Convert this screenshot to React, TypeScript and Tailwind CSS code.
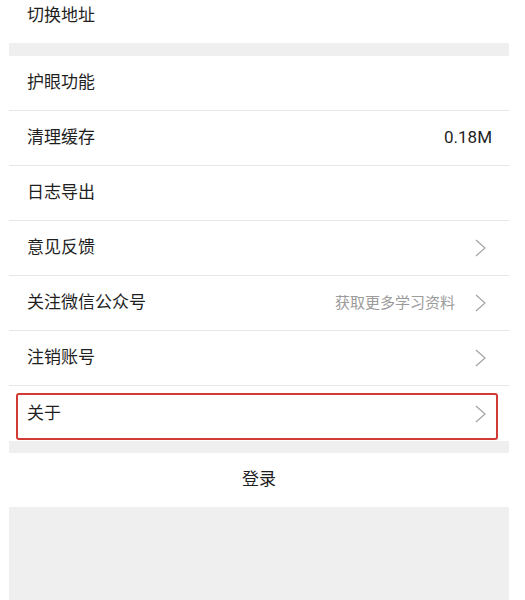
import React from "react";

const Chevron = () => (
  <svg width="11" height="18" viewBox="0 0 11 18" className="mr-[6px] shrink-0">
    <path d="M1 1 L10 9 L1 17" fill="none" stroke="#a0a0a0" strokeWidth="1.1" />
  </svg>
);

type RowProps = {
  label: string;
  value?: string;
  valueGray?: boolean;
  chevron?: boolean;
  border?: boolean;
  highlight?: boolean;
};

const Row = ({ label, value, valueGray, chevron, border = true, highlight }: RowProps) => (
  <div
    className={`relative flex h-[55px] items-center justify-between bg-white pl-[18px] pr-[17px] ${
      border ? "border-b border-[#e6e6e6]" : ""
    }`}
  >
    <span className="text-[17px] text-[#1f1f1f]">{label}</span>
    <div className="flex items-center">
      {value && (
        <span className={valueGray ? "mr-[20px] text-[15px] text-[#9b9b9b]" : "text-[17px] text-[#1f1f1f]"}>
          {value}
        </span>
      )}
      {chevron && <Chevron />}
    </div>
    {highlight && (
      <div className="pointer-events-none absolute left-[7px] right-[11px] top-[7px] bottom-[1px] rounded-[3px] border-2 border-[#d23a34]" />
    )}
  </div>
);

export default function App() {
  return (
    <div
      className="min-h-screen bg-white"
      style={{ fontFamily: '"Roboto", "Noto Sans CJK SC", sans-serif' }}
    >
      <div className="ml-[9px] w-[500px] overflow-hidden">
        <div className="-mt-[12px]">
          <Row label="切换地址" border={false} />
        </div>
        <div className="h-[13px] bg-[#efefef]" />
        <Row label="护眼功能" />
        <Row label="清理缓存" value="0.18M" />
        <Row label="日志导出" />
        <Row label="意见反馈" chevron />
        <Row label="关注微信公众号" value="获取更多学习资料" valueGray chevron />
        <Row label="注销账号" chevron />
        <Row label="关于" chevron border={false} highlight />
        <div className="h-[12px] bg-[#efefef]" />
        <div className="flex h-[54px] items-center justify-center bg-white">
          <span className="text-[17px] text-[#1f1f1f]">登录</span>
        </div>
        <div className="h-[100px] bg-[#efefef]" />
      </div>
    </div>
  );
}
